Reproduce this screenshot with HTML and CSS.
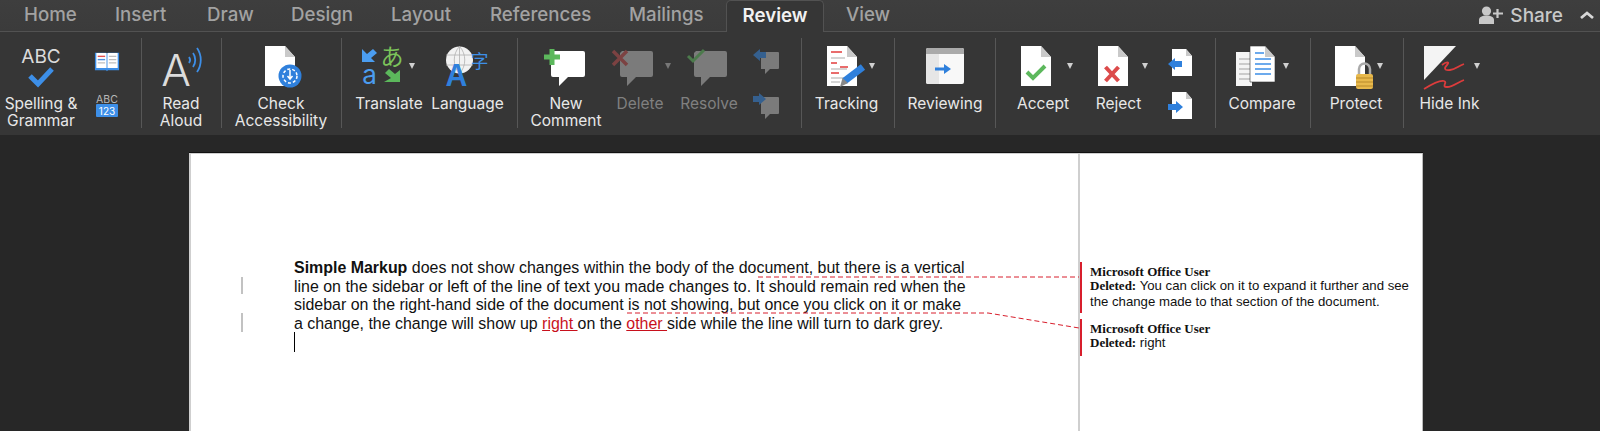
FILE: index.html
```html
<!DOCTYPE html>
<html lang="en">
<head>
<meta charset="utf-8">
<title>Review ribbon</title>
<link rel="stylesheet" href="styles.css">
</head>
<body>
<header class="tabbar">
  <nav class="tabs">
    <span class="tab t-home">Home</span>
    <span class="tab t-insert">Insert</span>
    <span class="tab t-draw">Draw</span>
    <span class="tab t-design">Design</span>
    <span class="tab t-layout">Layout</span>
    <span class="tab t-refs">References</span>
    <span class="tab t-mail">Mailings</span>
    <span class="tab tab-active">Review</span>
    <span class="tab t-view">View</span>
  </nav>
  <div class="share">
    <svg class="share-icon" width="24" height="18" viewBox="0 0 24 18"><circle cx="7.500" cy="5" r="4.600" fill="#c8c8c8"/><path d="M0 18v-4c0-3 3-4.500 7.500-4.500S15 11 15 14v4z" fill="#c8c8c8"/><path d="M18.500 3v9M14 7.500h10" stroke="#c8c8c8" stroke-width="2.200"/></svg>
    <span class="share-label">Share</span>
    <svg class="chev" width="14" height="8" viewBox="0 0 14 8"><path d="M1 7l6-5 6 5" fill="none" stroke="#d8d8d8" stroke-width="2.800"/></svg>
  </div>
</header>

<section class="ribbon">
  <div class="group g1">
    <div class="item w-spell">
      <svg class="icon" width="44" height="44" viewBox="0 0 44 44"><text x="22" y="18" text-anchor="middle" class="ic-abc">ABC</text><path d="M11 31l8 8 14-15" fill="none" stroke="#3d8fe8" stroke-width="5"/></svg>
      <span class="label">Spelling &amp;<br>Grammar</span>
    </div>
    <div class="stack w-s1">
      <svg width="26" height="24" viewBox="0 0 28 24"><path d="M1 3h12l1 1 1-1h12v19H15l-1 1-1-1H1z" fill="#3d8fe8"/><path d="M2.500 3.500h11v16h-11zM14.500 3.500h11v16h-11z" fill="#fff"/><path d="M4 7h8" stroke="#e25050" stroke-width="1.500"/><path d="M4 10.500h8" stroke="#4b90e0" stroke-width="1.500"/><path d="M4 14h8M16 7h8M16 10.500h8M16 14h8" stroke="#bdbdbd" stroke-width="1.500"/></svg>
      <svg class="abc123" width="26" height="26" viewBox="0 0 26 26"><text x="13" y="10" text-anchor="middle" class="ic-abc-s">ABC</text><rect x="2" y="11" width="22" height="13" rx="1" fill="#3d8fe8"/><text x="13" y="21.500" text-anchor="middle" class="ic-123">123</text></svg>
    </div>
  </div>

  <div class="group g2">
    <div class="item w-read">
      <svg class="icon" width="44" height="44" viewBox="0 0 44 44"><text x="17" y="41" text-anchor="middle" class="ic-a">A</text><path d="M30 12c1.500 2 1.500 4 0 6M34 8c3 4 3 10 0 14M38 3c5 7 5 17 0 24" fill="none" stroke="#3d8fe8" stroke-width="1.800"/></svg>
      <span class="label">Read<br>Aloud</span>
    </div>
  </div>

  <div class="group g3">
    <div class="item w-check">
      <svg class="icon" width="44" height="44" viewBox="0 0 44 44"><path d="M6 1h20l10 11v29H6z" fill="#fff"/><path d="M26 1v11h10z" fill="#c9c9c9"/><circle cx="31" cy="31" r="11.500" fill="#2f80dc"/><circle cx="31" cy="31" r="7" fill="none" stroke="#fff" stroke-width="1.500" stroke-dasharray="3 2"/><path d="M31 25v8M28.500 31l2.500 3 2.500-3" fill="none" stroke="#fff" stroke-width="1.500"/></svg>
      <span class="label">Check<br>Accessibility</span>
    </div>
  </div>

  <div class="group g4">
    <div class="item w-trans">
      <svg class="icon n7" width="44" height="44" viewBox="0 0 44 44"><path d="M2 17V4l5 5 6-5 4 4-6 5 4 4z" fill="#4b9df0"/><text x="32" y="20" text-anchor="middle" class="ic-ja">あ</text><text x="9.500" y="38.500" text-anchor="middle" class="ic-lat">a</text><path d="M40 37V25l-5 4-6-5-4 4 6 5-7 4z" fill="#5cb85c"/></svg>
      <i class="caret c-trans"></i>
      <span class="label">Translate</span>
    </div>
    <div class="item w-lang">
      <svg class="icon" width="48" height="44" viewBox="0 0 48 44"><circle cx="15.500" cy="15" r="13.500" fill="#f2f2f2"/><path d="M15.500 1.500v27M2 10h27M2 20h27M15.500 1.500c-7 7-7 20 0 27M15.500 1.500c7 7 7 20 0 27" fill="none" stroke="#b0b0b0" stroke-width=".8"/><text x="12.500" y="41" text-anchor="middle" class="ic-a-b">A</text><text x="35.500" y="23" text-anchor="middle" class="ic-zi">字</text></svg>
      <span class="label">Language</span>
    </div>
  </div>

  <div class="group g5">
    <div class="item w-new">
      <svg class="icon" width="44" height="44" viewBox="0 0 44 44"><path d="M9 6h30a2 2 0 0 1 2 2v22a2 2 0 0 1-2 2H24l-9 9v-9H9a2 2 0 0 1-2-2V8z" fill="#fff"/><path d="M8 4v16M0 12h16" stroke="#5cb85c" stroke-width="5"/></svg>
      <span class="label">New<br>Comment</span>
    </div>
    <div class="item w-del">
      <svg class="icon n7" width="44" height="44" viewBox="0 0 44 44"><path d="M11 6h29a2 2 0 0 1 2 2v22a2 2 0 0 1-2 2H25l-9 9v-9h-5a2 2 0 0 1-2-2V8z" fill="#7b7b7b"/><path d="M2 6l14 14M16 6L2 20" stroke="#7c4242" stroke-width="3.500"/></svg>
      <i class="caret caret-dim c-del"></i>
      <span class="label label-dim">Delete</span>
    </div>
    <div class="item w-res">
      <svg class="icon n2" width="44" height="44" viewBox="0 0 44 44"><path d="M11 6h29a2 2 0 0 1 2 2v22a2 2 0 0 1-2 2H25l-9 9v-9h-5a2 2 0 0 1-2-2V8z" fill="#7b7b7b"/><path d="M3 11l5 5L19 5" fill="none" stroke="#4c7a4c" stroke-width="3"/></svg>
      <span class="label label-dim">Resolve</span>
    </div>
    <div class="stack w-s2">
      <svg width="30" height="28" viewBox="0 0 30 28"><path d="M10 3h17a1 1 0 0 1 1 1v15a1 1 0 0 1-1 1H19l-5 5v-5h-4z" fill="#7b7b7b"/><path d="M2 6l7-6v3h6v6H9v3z" fill="#35608f"/></svg>
      <svg class="stack-low" width="30" height="28" viewBox="0 0 30 28"><path d="M10 4h17a1 1 0 0 1 1 1v15a1 1 0 0 1-1 1H19l-5 5v-5h-4z" fill="#7b7b7b"/><path d="M15 6L8 0v3H2v6h6v3z" fill="#35608f"/></svg>
    </div>
  </div>

  <div class="group g6">
    <div class="item w-track">
      <svg class="icon" width="44" height="44" viewBox="0 0 44 44"><path d="M2 1h20l10 11v29H2z" fill="#fff"/><path d="M22 1v11h10z" fill="#c9c9c9"/><path d="M6 7h11M6 18h6M15 22h8M6 28h8" stroke="#e23c3c" stroke-width="1.400"/><path d="M6 13h14M6 24h16M6 33h13M6 37h9" stroke="#c8c8c8" stroke-width="1.400"/><path d="M19.500 36L38 22" stroke="#2f80dc" stroke-width="7"/><path d="M15 42l2.500-9 5.500 5z" fill="#888"/></svg>
      <i class="caret c-track"></i>
      <span class="label">Tracking</span>
    </div>
  </div>

  <div class="group g7">
    <div class="item w-rev">
      <svg class="icon" width="44" height="44" viewBox="0 0 44 44"><rect x="3" y="3" width="38" height="36" rx="2" fill="#f8f8f8"/><path d="M3 9h13v30H5a2 2 0 0 1-2-2z" fill="#e6e6e6"/><path d="M3 5a2 2 0 0 1 2-2h34a2 2 0 0 1 2 2v4H3z" fill="#aaa"/><path d="M12 24h10" stroke="#2f80dc" stroke-width="3"/><path d="M21 19l7 5-7 5z" fill="#2f80dc"/></svg>
      <span class="label">Reviewing</span>
    </div>
  </div>

  <div class="group g8">
    <div class="item w-acc">
      <svg class="icon n7" width="44" height="44" viewBox="0 0 44 44"><path d="M7 1h20l10 11v29H7z" fill="#fff"/><path d="M27 1v11h10z" fill="#c9c9c9"/><path d="M13 27l6 6 12-12" fill="none" stroke="#5cb85c" stroke-width="4"/></svg>
      <i class="caret c-acc"></i>
      <span class="label">Accept</span>
    </div>
    <div class="item w-rej">
      <svg class="icon n6" width="44" height="44" viewBox="0 0 44 44"><path d="M7 1h20l10 11v29H7z" fill="#fff"/><path d="M27 1v11h10z" fill="#c9c9c9"/><path d="M14.500 22l13 14M27.500 22l-13 14" stroke="#dc4a4a" stroke-width="4"/></svg>
      <i class="caret c-rej"></i>
      <span class="label">Reject</span>
    </div>
    <div class="stack w-s3">
      <svg width="30" height="28" viewBox="0 0 30 28"><path d="M7 0h14l6 7v20H7z" fill="#fff"/><path d="M21 0v7h6z" fill="#c9c9c9"/><path d="M3 15l7-6v3h7v6h-7v3z" fill="#2f80dc"/></svg>
      <svg class="stack-low2" width="30" height="28" viewBox="0 0 30 28"><path d="M7 0h14l6 7v20H7z" fill="#fff"/><path d="M21 0v7h6z" fill="#c9c9c9"/><path d="M18 15l-7-6v3H3v6h8v3z" fill="#2f80dc"/></svg>
    </div>
  </div>

  <div class="group g9">
    <div class="item w-cmp">
      <svg class="icon n6" width="44" height="44" viewBox="0 0 44 44"><path d="M2 7h16v34H2z" fill="#f4f4f4"/><path d="M5 14h11M5 19h11M5 24h11M5 29h11M5 34h11" stroke="#bdbdbd" stroke-width="1.300"/><path d="M16 1h15l10 11v25H16z" fill="#fff" stroke="#333" stroke-width=".6"/><path d="M31 1v11h10z" fill="#c9c9c9"/><path d="M21 8h9M21 14h16M21 19h16M21 24h16M21 29h16" stroke="#3d8fe8" stroke-width="1.300"/></svg>
      <i class="caret c-cmp"></i>
      <span class="label">Compare</span>
    </div>
  </div>

  <div class="group g10">
    <div class="item w-pro">
      <svg class="icon n3" width="44" height="44" viewBox="0 0 44 44"><path d="M3 1h20l10 11v29H3z" fill="#fff"/><path d="M23 1v11h10z" fill="#c9c9c9"/><path d="M27 30v-6a5.500 5.500 0 0 1 11 0v6" fill="none" stroke="#aaa" stroke-width="2.500"/><rect x="24" y="29" width="17" height="15" rx="2" fill="#e8b94c"/><path d="M24 33h17M24 37h17M24 41h17" stroke="#b98a2a" stroke-width="1"/></svg>
      <i class="caret c-pro"></i>
      <span class="label">Protect</span>
    </div>
  </div>

  <div class="group g11">
    <div class="item w-ink">
      <svg class="icon n6" width="44" height="44" viewBox="0 0 44 44"><path d="M2 1h32L2 35z" fill="#f4f4f4"/><path d="M20 20c5-4 8-3 5 0s-3 6 3 5 8-4 14-6" fill="none" stroke="#dc3c3c" stroke-width="1.800"/><path d="M2 44c8-5 16-9 20-8s-3 6 3 6 11-5 17-7" fill="none" stroke="#dc3c3c" stroke-width="1.800"/></svg>
      <i class="caret c-ink"></i>
      <span class="label">Hide Ink</span>
    </div>
  </div>
</section>

<main class="workspace">
  <article class="page">
    <div class="body-col">
      <p class="para"><strong>Simple Markup</strong> does not show changes within the body of the document, but there is a vertical<br>line on the sidebar or left of the line of text you made changes to. It should remain red when the<br>sidebar on the right-hand side of the document is not showing, but once you click on it or make<br>a change, the change will show up <span class="ins">right </span>on the <span class="ins">other </span>side while the line will turn to dark grey.</p>
      <i class="cursor"></i>
      <i class="change c-one"></i>
      <i class="change c-two"></i>
    </div>
    <aside class="side-col">
      <div class="comment first">
        <div class="author">Microsoft Office User</div>
        <div class="note"><b>Deleted:</b> You can click on it to expand it further and see the change made to that section of the document.</div>
      </div>
      <div class="comment second">
        <div class="author">Microsoft Office User</div>
        <div class="note"><b>Deleted:</b> right</div>
      </div>
    </aside>
    <svg class="leaders" width="1234" height="278" viewBox="0 0 1234 278"><path d="M569 124H890M438 160H799L890 175" fill="none" stroke="#d81e2c" stroke-width="1" stroke-dasharray="5 3"/></svg>
  </article>
</main>
</body>
</html>
```
FILE: styles.css
```css
* { box-sizing: border-box; }
html, body { margin: 0; height: 431px; overflow: hidden; }
body { background: #272727; font-family: Inter, "Liberation Sans", sans-serif; display: flex; flex-direction: column; }
svg { overflow: visible; }

.tabbar { height: 32px; flex: none; display: flex; justify-content: space-between; background: linear-gradient(#3e3e3e, #3b3b3b); border-bottom: 1px solid #525252; }
.tabs { display: flex; align-items: stretch; padding-left: 24px; }
.tab { font-size: 18.700px; font-weight: 500; color: #a2a2a2; line-height: 30px; white-space: nowrap; }
.t-home { width: 91px; }
.t-insert { width: 92px; }
.t-draw { width: 84px; }
.t-design { width: 100px; }
.t-layout { width: 99px; }
.t-refs { width: 139px; }
.t-mail { width: 97px; }
.tab-active { width: 98px; height: 32px; text-align: center; color: #f2f2f2; font-weight: 600; background: #363636; border: 1px solid #525252; border-bottom: 0; border-radius: 5px 5px 0 0; }
.t-view { margin-left: 22px; }

.share { display: flex; align-items: center; padding-right: 6px; height: 30px; }
.share-icon { margin-right: 7px; }
.share-label { font-size: 19px; font-weight: 500; color: #c8c8c8; }
.chev { margin-left: 17px; }

.ribbon { height: 103px; flex: none; display: flex; background: #363636; color: #e8e8e8; padding: 6px 0 7px; }
.group { display: flex; height: 90px; border-right: 1px solid #575757; flex: none; }
.g1 { width: 142px; }
.g2 { width: 80px; }
.g3 { width: 120px; }
.g4 { width: 176px; }
.g5 { width: 284px; }
.g6 { width: 93px; }
.g7 { width: 101px; }
.g8 { width: 220px; }
.g9 { width: 95px; }
.g10 { width: 93px; }
.g11 { flex: 1; border-right: 0; }

.item { position: relative; display: flex; flex-direction: column; align-items: center; flex: none; padding-top: 7px; }
.icon { flex: none; height: 44px; }
.n2 { margin-right: 4px; }
.n3 { margin-right: 5px; }
.n6 { margin-right: 12px; }
.n7 { margin-right: 14px; }
.label { margin-top: 5.500px; font-size: 15.500px; line-height: 17.500px; text-align: center; white-space: nowrap; color: #e8e8e8; }
.label-dim { color: #808080; }
.stack { display: flex; flex-direction: column; align-items: center; flex: none; padding-top: 11px; }
.abc123 { margin-top: 20px; }
.stack-low { margin-top: 16px; }
.stack-low2 { margin-top: 15px; }

.w-spell { width: 82px; }
.w-s1 { width: 50px; }
.w-read { width: 78px; }
.w-check { width: 118px; }
.w-trans { width: 94px; }
.w-lang { width: 63px; }
.w-new { width: 96px; }
.w-del { width: 52px; }
.w-res { width: 86px; }
.w-s2 { width: 28px; }
.w-track { width: 89px; }
.w-rev { width: 100px; }
.w-acc { width: 94px; }
.w-rej { width: 57px; }
.w-s3 { width: 66px; }
.w-cmp { width: 92px; }
.w-pro { width: 90px; }
.w-ink { width: 91px; }

.caret { position: absolute; top: 25px; width: 0; height: 0; border: 3.500px solid transparent; border-top: 6px solid #d0d0d0; border-bottom: 0; }
.caret-dim { border-top-color: #777; }
.c-trans { left: 67px; }
.c-del { left: 51px; }
.c-track { left: 67px; }
.c-acc { left: 71px; }
.c-rej { left: 52px; }
.c-cmp { left: 67px; }
.c-pro { left: 66px; }
.c-ink { left: 70px; }

.ic-abc { font-family: Inter, sans-serif; font-size: 19px; fill: #dcdcdc; }
.ic-abc-s { font-family: Inter, sans-serif; font-size: 10.500px; fill: #b8b8b8; }
.ic-123 { font-family: Inter, sans-serif; font-size: 10px; fill: #fff; }
.ic-a { font-family: Inter, sans-serif; font-size: 44px; font-weight: 300; fill: #dcdcdc; }
.ic-a-b { font-family: Inter, sans-serif; font-size: 30px; font-weight: 600; fill: #2f80dc; }
.ic-ja { font-family: "Noto Sans CJK JP", sans-serif; font-size: 23px; fill: #7cc35a; }
.ic-zi { font-family: "Noto Sans CJK SC", sans-serif; font-size: 18px; fill: #3d8fe8; }
.ic-lat { font-family: Inter, sans-serif; font-size: 26px; fill: #4b9df0; }

.workspace { flex: 1; display: flex; padding: 18px 0 0 189px; min-height: 0; }
.page { position: relative; width: 1234px; background: #fff; display: flex; border-left: 2px solid #cfcfcf; border-right: 1px solid #bbb; box-shadow: inset 0 1px 0 #cfcfcf, 0 -1px 0 #111; }
.body-col { position: relative; width: 889px; padding: 106px 0 0 103px; border-right: 2px solid #cfcfcf; flex: none; }
.para { margin: 0; font-family: "Liberation Sans", Arial, sans-serif; font-size: 15.950px; line-height: 18.500px; color: #111; white-space: nowrap; }
.ins { color: #c8101c; text-decoration: underline; }
.cursor { position: absolute; left: 103px; top: 179px; width: 1px; height: 20px; background: #000; }
.change { position: absolute; left: 50px; width: 2px; background: #c2c2c2; }
.c-one { top: 124px; height: 17px; }
.c-two { top: 160px; height: 19px; }

.side-col { flex: 1; padding-top: 109px; }
.comment { border-left: 3px solid #d81e2c; padding-left: 8px; margin-left: -1px; color: #111; padding-top: 4px; }
.first { height: 51px; }
.second { height: 37px; margin-top: 6px; }
.author { font-family: "Liberation Serif", serif; font-weight: 700; font-size: 13px; line-height: 12px; }
.note { font-family: "Liberation Sans", Arial, sans-serif; font-size: 13.200px; line-height: 16px; }
.note b { font-family: "Liberation Serif", serif; font-size: 13px; }
.leaders { position: absolute; left: -2px; top: 0; pointer-events: none; }
```
